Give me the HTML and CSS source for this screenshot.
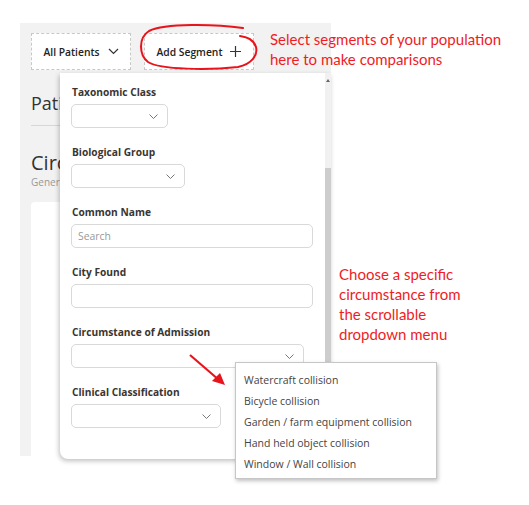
FILE: index.html
```html
<!DOCTYPE html>
<html>
<head>
<meta charset="utf-8">
<link rel="stylesheet" href="styles.css">
</head>
<body>
<div class="stage">
  <div class="app">
    <div class="toolbar">
      <div class="seg-btn seg-all">All Patients
        <svg class="chev-lg" width="11" height="7" viewBox="0 0 11 7"><path d="M1 1 L5.5 5.5 L10 1" fill="none" stroke="#333" stroke-width="1.2"/></svg>
      </div>
      <div class="seg-btn seg-add">Add Segment
        <svg class="plus" width="11" height="11" viewBox="0 0 11 11"><path d="M5.5 0 V11 M0 5.5 H11" fill="none" stroke="#333" stroke-width="1.2"/></svg>
      </div>
    </div>
    <div class="section">
      <h2 class="sec-title">Patients</h2>
      <div class="rule"></div>
      <h2 class="chart-title">Circumstances</h2>
      <div class="chart-sub">General</div>
      <div class="card">
        <div class="axis"></div>
      </div>
    </div>
  </div>

  <div class="panel">
    <div class="panel-body">
      <div class="field">
        <label class="lbl">Taxonomic Class</label>
        <div class="select w97"><svg class="chev" width="9" height="5" viewBox="0 0 9 5"><path d="M0.5 0.5 L4.5 4.5 L8.5 0.5" fill="none" stroke="#777" stroke-width="1"/></svg></div>
      </div>
      <div class="field">
        <label class="lbl">Biological Group</label>
        <div class="select w114"><svg class="chev" width="9" height="5" viewBox="0 0 9 5"><path d="M0.5 0.5 L4.5 4.5 L8.5 0.5" fill="none" stroke="#777" stroke-width="1"/></svg></div>
      </div>
      <div class="field">
        <label class="lbl">Common Name</label>
        <div class="input w242"><span class="ph">Search</span></div>
      </div>
      <div class="field">
        <label class="lbl">City Found</label>
        <div class="input w242"></div>
      </div>
      <div class="field">
        <label class="lbl">Circumstance of Admission</label>
        <div class="select w233"><svg class="chev" width="9" height="5" viewBox="0 0 9 5"><path d="M0.5 0.5 L4.5 4.5 L8.5 0.5" fill="none" stroke="#777" stroke-width="1"/></svg></div>
      </div>
      <div class="field">
        <label class="lbl">Clinical Classification</label>
        <div class="select w150"><svg class="chev" width="9" height="5" viewBox="0 0 9 5"><path d="M0.5 0.5 L4.5 4.5 L8.5 0.5" fill="none" stroke="#777" stroke-width="1"/></svg></div>
      </div>
    </div>
    <div class="scrollbar">
      <div class="sb-arrow"></div>
      <div class="sb-thumb"></div>
    </div>
  </div>

  <ul class="options">
    <li>Watercraft collision</li>
    <li>Bicycle collision</li>
    <li>Garden / farm equipment collision</li>
    <li>Hand held object collision</li>
    <li>Window / Wall collision</li>
  </ul>

  <svg class="circle" width="130" height="55" viewBox="135 20 130 55">
    <path d="M243 28 C215 24 165 23 149 31 C138 38 139 55 148 62 C160 70 210 70 238 67 C252 64 258 55 256 47 C254 40 248 37 240 36" fill="none" stroke="#e8141c" stroke-width="2" stroke-linecap="round"/>
  </svg>
  <svg class="arrow" width="50" height="45" viewBox="180 345 50 45">
    <line x1="190" y1="355" x2="219" y2="380" stroke="#e8141c" stroke-width="2.2"/>
    <polygon points="225,385 212,381 220,373" fill="#e8141c"/>
  </svg>

  <p class="note note-top">Select segments of your population<br>here to make comparisons</p>
  <p class="note note-right">Choose a specific<br>circumstance from<br>the scrollable<br>dropdown menu</p>
</div>
</body>
</html>
```
FILE: styles.css
```css
* { box-sizing: border-box; }
html, body { margin: 0; padding: 0; background: #fff; }
body { font-family: "Open Sans", sans-serif; color: #333; }

.stage { position: relative; width: 529px; height: 505px; padding: 23px 0 0 20px; }

.app {
  width: 311px;
  height: 433px;
  background: #f2f2f2;
  padding: 10px 11px 0 11px;
  display: flex;
  flex-direction: column;
  overflow: hidden;
}

.toolbar { display: flex; gap: 13px; }
.seg-btn {
  height: 37px;
  border: 1px dashed #c8c8c8;
  background: #fff;
  display: flex;
  align-items: center;
  justify-content: center;
  font-size: 10.3px;
  font-weight: 600;
  color: #222;
}
.seg-all { width: 100px; gap: 8px; }
.seg-add { width: 110px; gap: 8px; }

.section { display: flex; flex-direction: column; flex: 1; }
.sec-title { margin: 20px 0 0 0; font-size: 18px; font-weight: 400; line-height: 26px; color: #333; }
.rule { height: 1px; background: #d6d6d6; margin-top: 9px; width: 120px; }
.chart-title { margin: 23px 0 0 0; font-size: 20px; font-weight: 400; line-height: 27px; color: #333; }
.chart-sub { font-size: 10px; color: #999; line-height: 12px; }
.card { flex: 1; background: #fff; margin-top: 14px; border-radius: 4px 4px 0 0; position: relative; }
.axis { position: absolute; left: 155px; bottom: 0; width: 1px; height: 16px; background: #555; }

.panel {
  position: absolute;
  left: 60px;
  top: 73px;
  width: 271px;
  height: 386px;
  background: #fff;
  border-radius: 0 0 0 8px;
  box-shadow: -1px 2px 5px rgba(0,0,0,0.25);
  display: flex;
}
.panel-body { flex: 1; padding: 11px 0 0 11px; display: flex; flex-direction: column; gap: 16px; }
.field { display: flex; flex-direction: column; gap: 4px; }
.lbl { font-size: 10.2px; font-weight: 700; line-height: 16px; color: #3a3530; padding-left: 1px; }
.select, .input {
  height: 24px;
  border: 1px solid #d9d9d9;
  border-radius: 5px;
  display: flex;
  align-items: center;
  justify-content: flex-end;
  padding-right: 9px;
  background: #fff;
}
.input { justify-content: flex-start; padding-left: 6px; }
.ph { font-size: 10.4px; color: #999; }
.w97 { width: 97px; }
.w114 { width: 114px; }
.w242 { width: 242px; }
.w233 { width: 233px; }
.w150 { width: 150px; }

.scrollbar { width: 6px; background: #f1f1f1; display: flex; flex-direction: column; }
.sb-arrow { height: 95px; position: relative; }
.sb-arrow::before {
  content: "";
  position: absolute; left: 1px; top: 6px;
  border-left: 2px solid transparent; border-right: 2px solid transparent;
  border-bottom: 3px solid #666;
}
.sb-thumb { flex: 1; background: #cdcdcd; }

.options {
  position: absolute;
  left: 235px;
  top: 362px;
  width: 202px;
  height: 117px;
  margin: 0;
  padding: 7px 0 0 8px;
  list-style: none;
  background: #fff;
  border: 1px solid #c6c6c6;
  box-shadow: 1px 2px 4px rgba(0,0,0,0.25);
}
.options li { font-size: 10.5px; line-height: 21px; color: #444; white-space: nowrap; }

.circle { position: absolute; left: 135px; top: 20px; }
.arrow { position: absolute; left: 180px; top: 345px; }

.note {
  position: absolute;
  margin: 0;
  font-family: Lato, "Open Sans", sans-serif;
  font-size: 15px;
  line-height: 20px;
  color: #f01c24;
}
.note-top { left: 270px; top: 29px; }
.note-right { left: 339px; top: 264px; }
```
